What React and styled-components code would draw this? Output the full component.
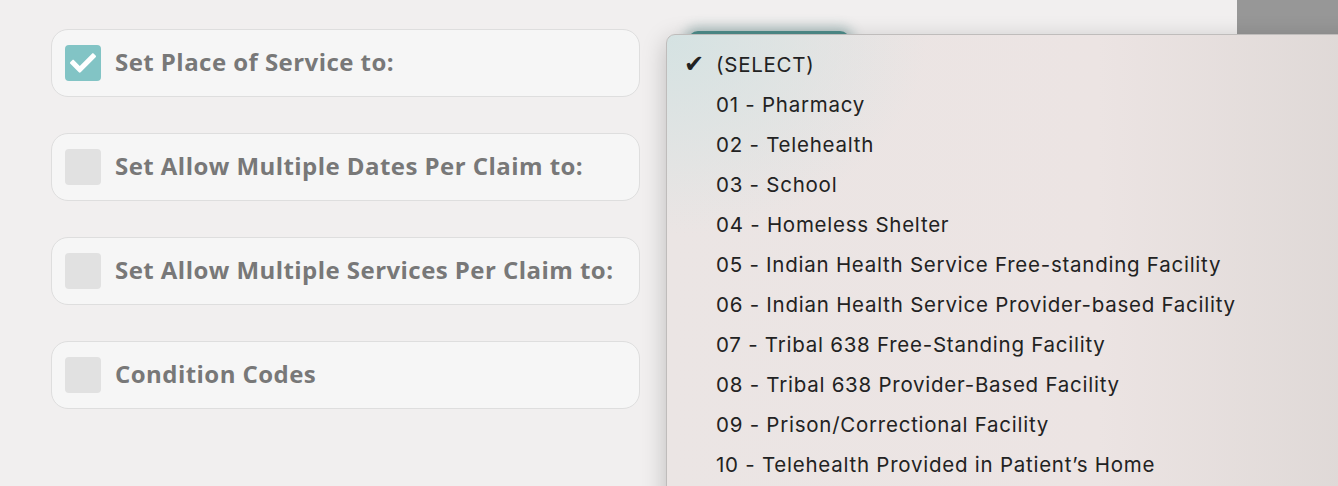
import styled, { createGlobalStyle } from 'styled-components';
import { FaCheck } from 'react-icons/fa';

const GlobalStyle = createGlobalStyle`
  html, body {
    margin: 0;
    padding: 0;
    height: 486px;
    overflow: hidden;
    background: #f1efef;
  }
`;

const options = [
  '(SELECT)',
  '01 - Pharmacy',
  '02 - Telehealth',
  '03 - School',
  '04 - Homeless Shelter',
  '05 - Indian Health Service Free-standing Facility',
  '06 - Indian Health Service Provider-based Facility',
  '07 - Tribal 638 Free-Standing Facility',
  '08 - Tribal 638 Provider-Based Facility',
  '09 - Prison/Correctional Facility',
  '10 - Telehealth Provided in Patient\u2019s Home',
];

const settings = [
  { label: 'Set Place of Service to:', checked: true },
  { label: 'Set Allow Multiple Dates Per Claim to:', checked: false },
  { label: 'Set Allow Multiple Services Per Claim to:', checked: false },
  { label: 'Condition Codes', checked: false },
];

export default function App() {
  return (
    <>
      <GlobalStyle />
      <Page>
        <Main>
          <Column>
            {settings.map((s) => (
              <SettingCard key={s.label}>
                <Checkbox $checked={s.checked}>
                  {s.checked && <FaCheck size={26} color="#fff" />}
                </Checkbox>
                <Label>{s.label}</Label>
              </SettingCard>
            ))}
          </Column>
          <SelectArea>
            <SelectButton />
          </SelectArea>
        </Main>
        <SidePanel />
        <Menu>
          {options.map((o, i) => (
            <MenuItem key={o}>
              <Tick>{i === 0 ? '\u2714' : ''}</Tick>
              {o}
            </MenuItem>
          ))}
        </Menu>
      </Page>
    </>
  );
}

const Page = styled.div`
  position: relative;
  display: grid;
  grid-template-columns: 1fr 101px;
  height: 486px;
  overflow: hidden;
`;

const Main = styled.div`
  display: flex;
  padding: 29px 0 0 51px;
`;

const Column = styled.div`
  display: flex;
  flex-direction: column;
  gap: 36px;
  width: 589px;
`;

const SettingCard = styled.div`
  box-sizing: border-box;
  height: 68px;
  display: flex;
  align-items: center;
  gap: 14px;
  padding: 0 13px;
  background: #f6f6f6;
  border: 1.5px solid #dedede;
  border-radius: 17px;
`;

const Checkbox = styled.div`
  width: 36px;
  height: 36px;
  border-radius: 4px;
  background: ${(p) => (p.$checked ? '#82c4c5' : '#e1e1e1')};
  display: flex;
  align-items: center;
  justify-content: center;
  flex-shrink: 0;
`;

const Label = styled.span`
  font-family: 'Open Sans', sans-serif;
  font-weight: 700;
  font-size: 24px;
  letter-spacing: 0.45px;
  line-height: 1;
  margin-top: -2px;
  color: #787878;
  white-space: nowrap;
`;

const SelectArea = styled.div`
  padding-left: 48px;
`;

const SelectButton = styled.div`
  width: 162px;
  height: 50px;
  margin-top: 2px;
  border-radius: 10px;
  background: #4e8d8b;
  box-shadow: 0 0 12px 4px rgba(40, 100, 100, 0.35);
`;

const SidePanel = styled.div`
  background: #979797;
`;

const Menu = styled.div`
  position: absolute;
  left: 666px;
  top: 34px;
  width: 720px;
  height: 520px;
  box-sizing: border-box;
  padding-top: 9px;
  border: 1px solid #bfbcbb;
  border-radius: 9px;
  background:
    radial-gradient(ellipse 260px 200px at 0 0, rgba(210, 226, 226, 0.9), rgba(210, 226, 226, 0) 100%),
    linear-gradient(90deg, #ebe5e4 0%, #ece4e3 60%, #ddd7d5 100%);
  box-shadow: 0 6px 24px rgba(0, 0, 0, 0.22);
`;

const MenuItem = styled.div`
  display: flex;
  align-items: center;
  height: 40px;
  padding-left: 17px;
  font-family: Inter, 'Liberation Sans', sans-serif;
  font-size: 20.5px;
  letter-spacing: 0.75px;
  color: #222;
  white-space: nowrap;
`;

const Tick = styled.span`
  display: inline-block;
  width: 32px;
  font-family: 'DejaVu Sans', sans-serif;
  font-size: 24px;
  letter-spacing: 0;
`;
